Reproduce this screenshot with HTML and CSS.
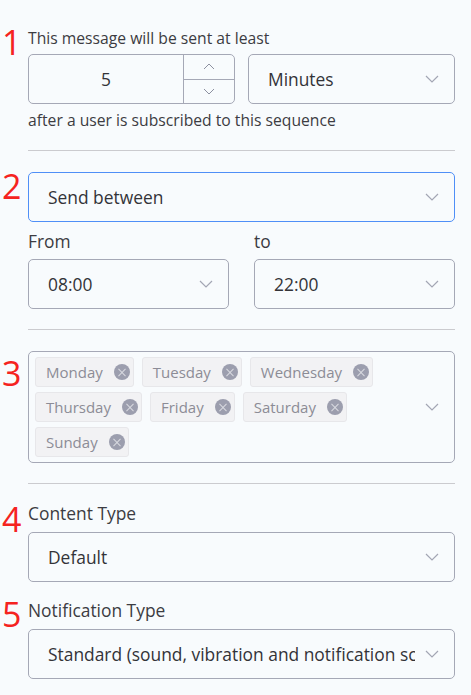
FILE: index.html
```html
<!DOCTYPE html>
<html>
<head>
<meta charset="utf-8">
<link rel="stylesheet" href="styles.css">
</head>
<body>
<div class="page">
  <section class="sec sec1">
    <div class="num n1">1</div>
    <div class="body">
      <div class="small">This message will be sent at least</div>
      <div class="row2">
        <div class="field numfield">
          <div class="numval">5</div>
          <div class="stepper">
            <div class="step"><svg width="12" height="7" viewBox="0 0 12 7"><path d="M1 6 L6 1 L11 6" fill="none" stroke="#8d90a0" stroke-width="1"/></svg></div>
            <div class="step"><svg width="12" height="7" viewBox="0 0 12 7"><path d="M1 1 L6 6 L11 1" fill="none" stroke="#8d90a0" stroke-width="1"/></svg></div>
          </div>
        </div>
        <div class="field select"><span class="val">Minutes</span><svg class="chev" width="14" height="8" viewBox="0 0 14 8"><path d="M1 1 L7 7 L13 1" fill="none" stroke="#a3a6b4" stroke-width="1.2"/></svg></div>
      </div>
      <div class="small after">after a user is subscribed to this sequence</div>
    </div>
  </section>
  <hr class="div">
  <section class="sec sec2">
    <div class="num n2">2</div>
    <div class="body">
      <div class="field select active"><span class="val">Send between</span><svg class="chev" width="14" height="8" viewBox="0 0 14 8"><path d="M1 1 L7 7 L13 1" fill="none" stroke="#a3a6b4" stroke-width="1.2"/></svg></div>
      <div class="times">
        <div class="tcol">
          <div class="label">From</div>
          <div class="field select"><span class="val">08:00</span><svg class="chev" width="14" height="8" viewBox="0 0 14 8"><path d="M1 1 L7 7 L13 1" fill="none" stroke="#a3a6b4" stroke-width="1.2"/></svg></div>
        </div>
        <div class="tcol">
          <div class="label">to</div>
          <div class="field select"><span class="val">22:00</span><svg class="chev" width="14" height="8" viewBox="0 0 14 8"><path d="M1 1 L7 7 L13 1" fill="none" stroke="#a3a6b4" stroke-width="1.2"/></svg></div>
        </div>
      </div>
    </div>
  </section>
  <hr class="div">
  <section class="sec sec3">
    <div class="num n3">3</div>
    <div class="body">
      <div class="tagbox">
        <div class="tags">
          <span class="tag">Monday<i class="x"></i></span>
          <span class="tag">Tuesday<i class="x"></i></span>
          <span class="tag">Wednesday<i class="x"></i></span>
          <span class="tag">Thursday<i class="x"></i></span>
          <span class="tag">Friday<i class="x"></i></span>
          <span class="tag">Saturday<i class="x"></i></span>
          <span class="tag">Sunday<i class="x"></i></span>
        </div>
        <svg class="chev" width="14" height="8" viewBox="0 0 14 8"><path d="M1 1 L7 7 L13 1" fill="none" stroke="#a3a6b4" stroke-width="1.2"/></svg>
      </div>
    </div>
  </section>
  <hr class="div div3">
  <section class="sec sec4">
    <div class="num n4">4</div>
    <div class="body">
      <div class="label">Content Type</div>
      <div class="field select"><span class="val">Default</span><svg class="chev" width="14" height="8" viewBox="0 0 14 8"><path d="M1 1 L7 7 L13 1" fill="none" stroke="#a3a6b4" stroke-width="1.2"/></svg></div>
    </div>
  </section>
  <section class="sec sec5">
    <div class="num n5">5</div>
    <div class="body">
      <div class="label">Notification Type</div>
      <div class="field select"><span class="val">Standard (sound, vibration and notification screen)</span><svg class="chev" width="14" height="8" viewBox="0 0 14 8"><path d="M1 1 L7 7 L13 1" fill="none" stroke="#a3a6b4" stroke-width="1.2"/></svg></div>
    </div>
  </section>
</div>
</body>
</html>
```
FILE: styles.css
```css
* { box-sizing: border-box; }
html, body { margin: 0; padding: 0; }
body {
  background: #f8fbfd;
  font-family: "Open Sans", "Noto Sans", sans-serif;
  color: #333338;
}
.page {
  width: 471px;
  padding: 28px 16px 0 0;
}
.sec {
  display: grid;
  grid-template-columns: 28px 427px;
}
.num {
  font-family: "Open Sans", sans-serif;
  font-size: 34px;
  line-height: 34px;
  color: #f5231f;
  padding-left: 2px;
}
.n1 { margin-top: -3px; }
.n2 { margin-top: -3px; }
.n3 { margin-top: 5px; }
.n4 { margin-top: 0; }
.n5 { margin-top: -2px; }
.small {
  font-size: 15.7px;
  line-height: 20px;
  color: #3c3c42;
}
.after { margin-top: 6px; }
.row2 {
  display: flex;
  gap: 13px;
  margin-top: 6px;
}
.field {
  height: 50px;
  border: 1px solid #a5a8b6;
  border-radius: 5px;
  background: #f8fbfd;
}
.numfield {
  width: 207px;
  display: flex;
}
.numval {
  flex: 1;
  display: flex;
  align-items: center;
  justify-content: center;
  font-size: 17.4px;
  color: #333338;
}
.stepper {
  width: 51px;
  border-left: 1px solid #a5a8b6;
  display: flex;
  flex-direction: column;
}
.step {
  flex: 1;
  display: flex;
  align-items: center;
  justify-content: center;
}
.step + .step { border-top: 1px solid #a5a8b6; }
.select {
  flex: 1;
  display: flex;
  align-items: center;
  padding: 0 15px 0 19px;
  font-size: 17.4px;
  min-width: 0;
}
.select .val {
  flex: 1;
  min-width: 0;
  white-space: nowrap;
  overflow: hidden;
}
.select .chev { flex: none; margin-left: 10px; }
.active { border-color: #4f8ff7; }
.div {
  border: 0;
  border-top: 1px solid #cbcbcf;
  margin: 20px 0 21px 28px;
  width: 427px;
  height: 0;
}
.div3 { margin-bottom: 18px; }
.times {
  display: flex;
  gap: 25px;
  margin-top: 8px;
}
.tcol:first-child { width: 201px; }
.tcol:last-child { flex: 1; }
.label {
  font-size: 17.4px;
  line-height: 22px;
  color: #3c3c42;
  margin-bottom: 7px;
}
.tagbox {
  border: 1px solid #a5a8b6;
  border-radius: 5px;
  height: 112px;
  display: flex;
  align-items: center;
  padding: 5px 15px 5px 6px;
}
.tags {
  flex: 1;
  align-self: flex-start;
  display: flex;
  flex-wrap: wrap;
  gap: 5px 8px;
}
.tag {
  height: 30px;
  display: inline-flex;
  align-items: center;
  padding: 0 3px 0 10px;
  background: #f2f2f4;
  border: 1px solid #e7e7ea;
  border-radius: 3px;
  font-size: 15px;
  color: #8c8c96;
}
.x {
  width: 16px;
  height: 16px;
  border-radius: 50%;
  background: #9c9eae;
  margin-left: 11px;
  position: relative;
}
.x::before, .x::after {
  content: "";
  position: absolute;
  left: 3px;
  top: 7.5px;
  width: 10px;
  height: 1px;
  background: #d9dae0;
  transform: rotate(45deg);
}
.x::after { transform: rotate(-45deg); }
.sec5 { margin-top: 17px; }
.sec4 .label, .sec5 .label { margin-bottom: 8px; }
```
